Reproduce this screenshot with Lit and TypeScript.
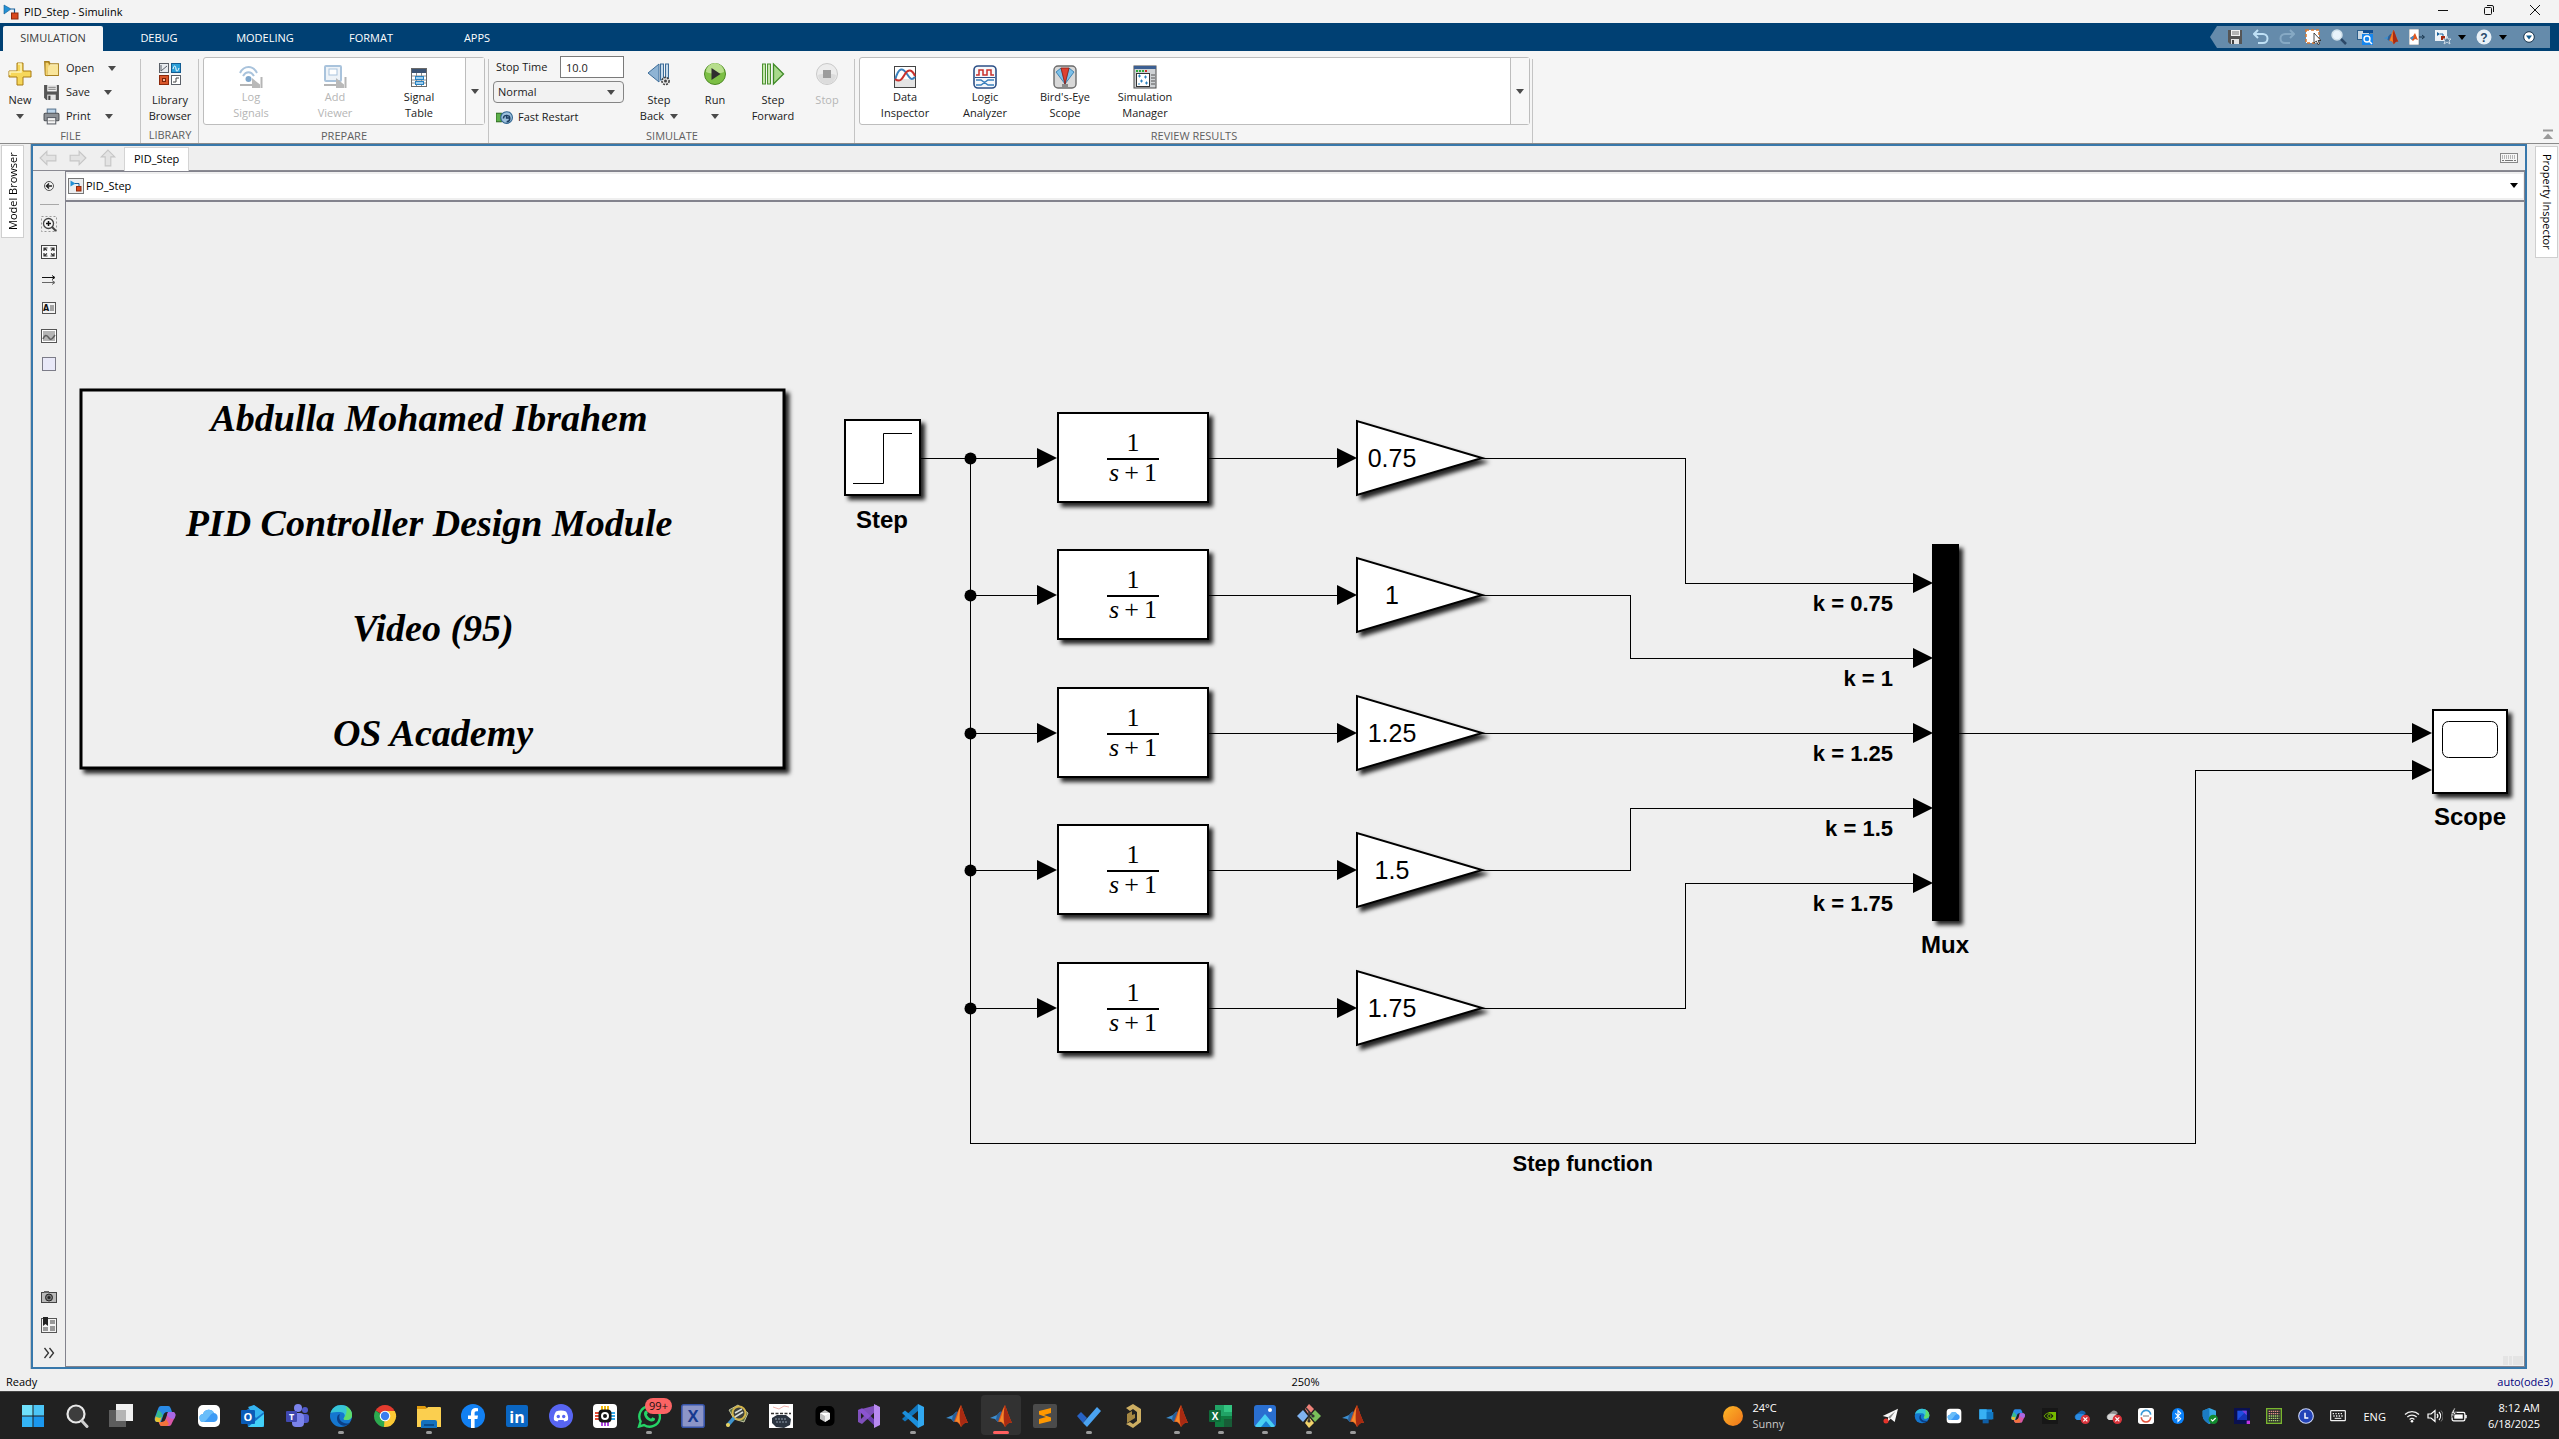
import { LitElement, html, svg, css, nothing, TemplateResult } from "lit";
import { customElement } from "lit/decorators.js";

/* ---------- icon helpers ---------- */

const icon = (size: number, box: number, body: unknown) => html`<svg
  class="ico" width=${size} height=${size} viewBox="0 0 ${box} ${box}" aria-hidden="true">${body}</svg>`;

const caret = (w = 8, fill = "#4a4a4a") => html`<svg class="ico" width=${w} height="5" viewBox="0 0 8 5"
  aria-hidden="true"><path d="M0 0h8L4 5z" fill=${fill} /></svg>`;

const matlab = svg`
  <path d="M1 14 8 11 11 8 15 10 9 18 6 15z" fill="#3d8fd1" />
  <path d="M8 11 11 8 12 7 15 11 9 18 7 15.500z" fill="#2a5f96" />
  <path d="M16 1C13 6 12 10 9 18c3-1 5 1 7 5 2-2 3-5 7-4C20 13 18 6 16 1z" fill="#e0561c" />
  <path d="M16 1c-2 7-2 13 0 22 2-2 3-5 7-4C20 13 18 6 16 1z" fill="#a82a12" />
  <path d="M15.500 3c-1 5-1.500 11-.5 17-1.500-2-3-3-5-2 3-6 3-10 5.500-15z" fill="#f58a2c" />`;

const edge = svg`
  <circle cx="12" cy="12" r="11" fill="#1577cf" />
  <path d="M1.500 9C3 4 7 1 12 1c7 0 11 5 11 10 0 3-2 5-6 5-2 0-3-1-2-2 2-3 0-6-4-6-4 0-8 0-9.500 1z" fill="#37c5d6" />
  <path d="M17 2.200c4 2 6 5 6 8.800 0 3-2 5-6 5-2 0-3-1-2-2 3-4 3-8 2-11.800z" fill="#5fdc6a" />
  <path d="M9 11c-2 3-1 8 3 10 3 1.500 7 .5 9-2-4 1-8 0-10-3-1-2-1-4 0-6z" fill="#0b3f86" />`;

const copilot = svg`
  <path d="M8 2h7c2 0 2 1 3 3l1 3h-5c-2 0-3 1-4 4l-2 6H5c-3 0-4-2-3-5l3-8c.6-2 1.500-3 3-3z" fill="#2a8be6" />
  <path d="M3 12c2-1 4-1 6 0l-2 6H5c-3 0-4-2-2-6z" fill="#e8c12f" />
  <path d="M5 6c2 1 4 3 5 6l-3 2-4-1z" fill="#37bb8c" />
  <path d="M16 22H9c-2 0-2-1-3-3l-.4-1H9c2 0 3-1 4-4l2-6h4c3 0 4 2 3 5l-3 6c-.6 2-1.500 3-3 3z" fill="#d957a8" />
  <path d="M6 18h3c2 0 3-1 4-3l3 5-2 2H9c-2 0-2-1-3-4z" fill="#f2733c" />
  <path d="M15 8h4c3 0 4 2 3 5l-1 2c-2 0-5-1-7-4z" fill="#a768e6" />`;

const icloud = svg`
  <rect x="1" y="1" width="22" height="22" rx="5" fill="#fff" />
  <path d="M7 18a4 4 0 0 1-1-8 6 6 0 0 1 11-1 4.600 4.600 0 0 1 0 9z" fill="#3d9bf5" />
  <path d="M6 10a6 6 0 0 1 11-1c-4 0-5 6-10 9a4 4 0 0 1-1-8z" fill="#69bdf9" />`;

const floppy = svg`
  <path d="M1 1h14v14H3l-2-2z" fill="#555" />
  <rect x="4" y="1" width="9" height="6" fill="#f2f2f2" />
  <path d="M5 3h7M5 5h7" stroke="#777" />
  <rect x="4" y="10" width="8" height="5" fill="#e4e4e4" />
  <rect x="5" y="11" width="2" height="4" fill="#444" />`;

const simulink = svg`
  <path d="M1 1l7 4-7 5z" fill="#2390d4" stroke="#135c92" stroke-width=".6" />
  <path d="M8 5h3.500v4" fill="none" stroke="#16609b" stroke-width="1.200" />
  <rect x="8.500" y="9" width="6.500" height="6" fill="#d9481c" stroke="#8d2a0c" />`;

/* ---------- ribbon icons (24 grid) ---------- */

const R: Record<string, unknown> = {
  plus: svg`<path d="M9 1h6v8h8v6h-8v8H9v-8H1V9h8z" fill="#f6d75a" stroke="#a87a12" />
    <path d="M10 2h3v8H2v3" fill="none" stroke="#fdf3b8" stroke-width="1.500" />`,
  library: svg`<rect x="1.500" y="1.500" width="9" height="9" fill="#e9ecf0" stroke="#5b6068" />
    <path d="M3 3v6l6-5" fill="none" stroke="#5b6068" />
    <rect x="13.500" y="1.500" width="9" height="9" fill="#2b9fd8" stroke="#135c92" />
    <path d="M15 7c1-4 2.500-4 3 0s2 2 3-1" fill="none" stroke="#fff" />
    <rect x="1.500" y="13.500" width="9" height="9" fill="#d9562a" stroke="#8d2a0c" />
    <rect x="4.500" y="16.500" width="3" height="3" fill="#f6b598" stroke="#7a2208" />
    <rect x="13.500" y="13.500" width="9" height="9" fill="#fff" stroke="#5b6068" />
    <path d="M15 20h3v-4h3" fill="none" stroke="#444" />`,
  logsig: svg`<g fill="none" stroke="#a9c3dc" stroke-width="2"><path d="M1 8c4-8 13-8 17 0" /><path d="M4 11c3-5 8-5 11 0" /></g>
    <circle cx="9.500" cy="14" r="3" fill="#7fa7cc" />
    <path d="M1 20h13M22.500 12v11" stroke="#b5b5b5" stroke-width="2" /><path d="M13 13l8 6.500V23h-8z" fill="#b9b9b9" />`,
  viewer: svg`<rect x="2" y="1" width="16" height="15" rx="1" fill="#eef3f8" stroke="#a9c3dc" stroke-width="2" />
    <rect x="6" y="4" width="8" height="6" fill="#fff" stroke="#a9c3dc" />
    <path d="M1 20h13M22.500 12v11" stroke="#b5b5b5" stroke-width="2" /><path d="M13 13l8 6.500V23h-8z" fill="#b9b9b9" />`,
  sigtable: svg`<rect x="4.500" y="3.500" width="15" height="18" fill="#fff" stroke="#6a6a6a" /><rect x="5" y="4" width="14" height="4" fill="#3c5372" />
    <path d="M5 11h14M5 15h14M5 18h14M9.500 8v13M14.500 8v13" stroke="#8c8c8c" />
    <rect x="8.500" y="11.500" width="8" height="3" fill="#9fd0f0" stroke="#2b82c0" /><rect x="8.500" y="16.500" width="8" height="3" fill="#9fd0f0" stroke="#2b82c0" />`,
  stepback: svg`<path d="M12 2v18L1 11z" fill="#8fb4d4" stroke="#3c6c98" /><rect x="13.500" y="2" width="3" height="16" fill="#c7dbec" stroke="#3c6c98" />
    <rect x="18.500" y="2" width="3" height="14" fill="#c7dbec" stroke="#3c6c98" /><circle cx="18.500" cy="19" r="3.600" fill="#e4e4e4" stroke="#444" stroke-width="1.600" stroke-dasharray="2 1" /><circle cx="18.500" cy="19" r="1.500" fill="#444" />`,
  run: svg`<circle cx="12" cy="12" r="10.500" fill="#7cbf45" stroke="#4e8a25" /><path d="M3 10a9 9 0 0 1 18 0c-5 2-13 2-18 0z" fill="#b7de8c" />
    <path d="M8.500 6v12l9-6z" fill="#2e2e2e" />`,
  stepfwd: svg`<rect x="1.500" y="2" width="3" height="20" fill="#c4e6ab" stroke="#4b9030" /><rect x="6.500" y="2" width="3" height="20" fill="#c4e6ab" stroke="#4b9030" />
    <path d="M12.500 2v20l10-10z" fill="#a9d98c" stroke="#3f8a27" stroke-width="1.300" />`,
  stop: svg`<circle cx="12" cy="12" r="10.500" fill="#ececec" stroke="#c9c9c9" /><path d="M3 13a9 9 0 0 0 18 0c-5-2-13-2-18 0z" fill="#dcdcdc" /><rect x="8" y="8" width="8" height="8" fill="#9c9c9c" />`,
  datainsp: svg`<rect x="1.500" y="1.500" width="21" height="21" fill="#fff" stroke="#444" /><path d="M2 14h20v8H2z" fill="#e4e4e4" />
    <path d="M2 15C6 1 10 3 14 9s5 6 8 3" fill="none" stroke="#3a80bd" stroke-width="2" /><path d="M2 14c5 4 7 0 10-5s7-5 10 2" fill="none" stroke="#c9302c" stroke-width="2" />`,
  logic: svg`<rect x="1" y="1" width="22" height="22" rx="4" fill="#f6f8fb" stroke="#2c4f86" stroke-width="1.600" />
    <path d="M3 10h3V5h4v5h4V5h4v5h3" fill="none" stroke="#c9302c" stroke-width="1.500" />
    <path d="M2 12.500h20" stroke="#2c4f86" /><path d="M3 15h5l7 5h6M3 20h5l7-5h6" fill="none" stroke="#3a80bd" stroke-width="1.500" />`,
  bird: svg`<rect x="1" y="1" width="22" height="22" rx="4" fill="#d8d8d8" stroke="#6b6b6b" stroke-width="1.400" />
    <path d="M3 7l5-4 4 16zM21 7l-5-4-4 16z" fill="#7cc1ea" stroke="#2b75a8" stroke-width=".8" />
    <path d="M8 3h8l-4 16z" fill="#dd4030" stroke="#8f1d12" stroke-width=".8" /><rect x="9" y="19" width="6" height="3" fill="#8a8a8a" />`,
  simmgr: svg`<rect x="1" y="1" width="22" height="22" fill="#cfd2d5" stroke="#4a4a4a" /><rect x="1" y="1" width="22" height="3" fill="#3c5f92" />
    <path d="M3 6h2M6 6h2M9 6h2" stroke="#2fae3a" stroke-width="2" /><path d="M12 6h2" stroke="#cf2d24" stroke-width="2" />
    <rect x="3.500" y="8.500" width="13" height="13" fill="#fff" stroke="#333" />
    <path d="M5 11h3M6.500 9.500v3M11 12h3M12.500 10.500v3M7 16h3M8.500 14.500v3M12 18h3M13.500 16.500v3M5 19h2" stroke="#2b82c0" />
    <path d="M18 10h4M18 13h4M18 16h4M18 19h4" stroke="#555" />`,
};

/* ---------- small ribbon and quick-access icons (16 grid) ---------- */

const S: Record<string, unknown> = {
  open: svg`<path d="M1 1h5l1 2h8v12H2z" fill="#a8801f" /><path d="M3 4h11v10H4z" fill="#fff4c4" /><path d="M2 2h3l1 2-2 11-2-1z" fill="#f3d26d" stroke="#a8801f" stroke-width=".8" /><path d="M5 5h9v9H4z" fill="#f9e59a" />`,
  save: floppy,
  print: svg`<rect x="4" y="1" width="8" height="5" fill="#bcd4ea" stroke="#5c7790" /><rect x="1" y="5" width="14" height="7" rx="1" fill="#8d9196" stroke="#4d5156" />
    <rect x="4" y="9" width="8" height="6" fill="#f5f5f5" stroke="#5c6068" /><path d="M5 12h6" stroke="#999" />`,
  fast: svg`<rect x="0" y="4" width="5" height="8" fill="#5db04a" stroke="#2c6b1f" /><circle cx="10" cy="8" r="5.500" fill="#9cc0dd" stroke="#2f648f" />
    <path d="M7 9a3 3 0 1 1 3 3M10 5.500v3h2.500" fill="none" stroke="#1d3f63" stroke-width="1.400" />`,
  undo: svg`<path d="M1 5h9a4.500 4.500 0 0 1 0 9H5" fill="none" stroke="#bfe0f5" stroke-width="2" /><path d="M5 1L1 5l4 4" fill="none" stroke="#bfe0f5" stroke-width="2" />`,
  redo: svg`<path d="M15 5H6a4.500 4.500 0 0 0 0 9h5" fill="none" stroke="#86a9c4" stroke-width="2" /><path d="M11 1l4 4-4 4" fill="none" stroke="#86a9c4" stroke-width="2" />`,
  select: svg`<rect x="1" y="1" width="13" height="13" fill="#fff" stroke="#d9772e" stroke-width="1.500" stroke-dasharray="3 2" /><path d="M9 4v10l2.300-2L13 15.500l1.500-.7L13 11.500h3z" fill="#fff" stroke="#222" stroke-width=".8" />`,
  find: svg`<circle cx="6" cy="6" r="5" fill="#e8f3fb" stroke="#cfe0ea" stroke-width="1.500" /><path d="M10 10l5 5" stroke="#2d4968" stroke-width="2.500" />`,
  browse: svg`<rect x=".5" y="1.500" width="12" height="9" fill="#c9d7e2" stroke="#2c5f8c" /><path d="M6 1h10v3H6z" fill="#0f4f94" /><rect x="5" y="5" width="11" height="11" fill="#1686ee" /><circle cx="10" cy="10" r="3" fill="none" stroke="#fff" stroke-width="1.400" /><path d="M12 12l3 3" stroke="#fff" stroke-width="1.400" />`,
  export: svg`<rect x="0" y="0" width="10" height="16" fill="#fff" stroke="#555" stroke-width=".5" /><path d="M1 9l3-2 2-3 3 7-3-1-2 2z" fill="#e0561c" /><path d="M1 9l3-2 1 1-2 3z" fill="#3d8fd1" /><path d="M10 8h5M13 6l2.500 2L13 10" fill="none" stroke="#16324b" />`,
  model: svg`<rect x="0" y="1" width="12" height="11" fill="#eef3f7" /><path d="M2 3l3 2-3 2z" fill="#16609b" /><path d="M5 5h3v3" fill="none" stroke="#16609b" /><rect x="6" y="7" width="4" height="4" fill="#a2270e" /><path d="M12 7l1 3h3l-2 2 1 3-3-2-3 2 1-3-2-2h3z" fill="#5c7f9d" stroke="#cbd9e4" />`,
  help: svg`<circle cx="8" cy="8" r="7.500" fill="#e9f1f7" /><text x="8" y="12.500" text-anchor="middle" font-family="Liberation Sans" font-weight="bold" font-size="12" fill="#27496b">?</text>`,
  more: svg`<circle cx="8" cy="8" r="5.300" fill="#fff" stroke="#16324b" stroke-width="1" /><path d="M5 6.500h6L8 10.500z" fill="#0f5b8f" />`,
  model16: svg`<rect x=".5" y=".5" width="15" height="15" fill="#eceef0" stroke="#777" /><path d="M2.500 2.500l5 3-5 3z" fill="#2390d4" /><path d="M7 5.500h4v3" fill="none" stroke="#16609b" /><rect x="8.500" y="8.500" width="4.500" height="4.500" fill="#d9481c" stroke="#8d2a0c" />`,
};

/* ---------- canvas palette icons (16 grid) ---------- */

const P: Record<string, unknown> = {
  hide: svg`<circle cx="8" cy="8" r="4.500" fill="#f4f4f4" stroke="#555" /><path d="M11 8H6M8 5.500L5.500 8 8 10.500" fill="none" stroke="#222" stroke-width="1.500" />`,
  zoom: svg`<rect x=".5" y=".5" width="15" height="15" fill="none" stroke="#999" stroke-dasharray="2 2" /><circle cx="7.500" cy="7.500" r="5" fill="#f6f6f6" stroke="#444" stroke-width="1.300" /><path d="M11 11l4 4" stroke="#444" stroke-width="2" /><path d="M5 7.500h5M7.500 5v5" stroke="#111" stroke-width="1.500" />`,
  fit: svg`<rect x=".5" y="1.500" width="15" height="13" fill="#fafafa" stroke="#444" /><path d="M3 7V4h3.500M3 4l3 2.500M13 7V4H9.500M13 4l-3 2.500M3 9v3h3.500M3 12l3-2.500M13 9v3H9.500M13 12l-3-2.500" fill="none" stroke="#333" stroke-width="1.200" />`,
  lines: svg`<path d="M1 5.500h12M11 3.500l3 2-3 2" fill="none" stroke="#111" /><path d="M1 10.500h12M11 8.500l3 2-3 2" fill="none" stroke="#666" />`,
  text: svg`<rect x="1.500" y="2.500" width="13" height="11" fill="#f3f3f3" stroke="#555" /><text x="2" y="11" font-family="DejaVu Sans" font-weight="bold" font-size="8" fill="#111">A</text><path d="M9 6h4M9 8h4M9 10h4" stroke="#555" />`,
  image: svg`<rect x=".5" y="1.500" width="15" height="13" fill="#fff" stroke="#555" /><rect x="2" y="3" width="12" height="10" fill="#b5b5b5" /><path d="M2 11c2-5 4-4 6-1s4 0 6-3" fill="none" stroke="#5f5f5f" stroke-width="1.500" />`,
  area: svg`<rect x="1.500" y="1.500" width="13" height="13" fill="#e9e9f8" stroke="#7c7c88" />`,
  camera: svg`<rect x=".5" y="3.500" width="15" height="10" fill="#b9b9b9" stroke="#444" /><rect x="3" y="2" width="5" height="2" fill="#666" /><circle cx="8" cy="8.500" r="3.500" fill="#777" stroke="#222" /><circle cx="8" cy="8.500" r="1.500" fill="#222" />`,
  book: svg`<rect x=".5" y="1.500" width="15" height="14" fill="#f3f3f3" stroke="#555" /><path d="M2 0h5v9L4.500 7 2 9z" fill="#222" /><path d="M9 3h5v4H9zM9 9h5v5H9zM2 10h5v4H2z" fill="#999" />`,
  more: svg`<path d="M3.500 3l4 5-4 5M8.500 3l4 5-4 5" fill="none" stroke="#333" stroke-width="1.300" />`,
  left: svg`<path d="M1 8l6-6v3.500h8v5H7V14z" fill="#e3e3e3" stroke="#c6c6c6" />`,
  right: svg`<path d="M15 8L9 2v3.500H1v5h8V14z" fill="#e3e3e3" stroke="#c6c6c6" />`,
  up: svg`<path d="M8 1l6 6h-3.500v8h-5V7H2z" fill="#e3e3e3" stroke="#c6c6c6" />`,
};

/* ---------- taskbar ---------- */

interface Task { name: string; art: unknown; state?: "open" | "active"; badge?: string }

const txt = (s: string, x: number, y: number, size: number, fill: string) =>
  svg`<text x=${x} y=${y} text-anchor="middle" font-family="Open Sans, sans-serif" font-weight="bold" font-size=${size} fill=${fill}>${s}</text>`;

const tasks: Task[] = [
  { name: "Start", art: svg`<path d="M1 1h10.500v10.500H1z" fill="#6fe0fb" /><path d="M12.500 1H23v10.500H12.500z" fill="#4cc6f7" /><path d="M1 12.500h10.500V23H1z" fill="#34b4f5" /><path d="M12.500 12.500H23V23H12.500z" fill="#1a97ee" />` },
  { name: "Search", art: svg`<circle cx="11" cy="10" r="8.500" fill="#3d3d3d" stroke="#e8e8e8" stroke-width="2.200" /><path d="M17 17l5 5.500" stroke="#cfcfcf" stroke-width="3" stroke-linecap="round" />` },
  { name: "Task view", art: svg`<rect x="7" y="0" width="17" height="17" fill="#f0f0f0" /><rect x="0" y="6" width="17" height="17" fill="#5d5d5d" /><rect x="7" y="6" width="10" height="11" fill="#b4b4b4" />` },
  { name: "Copilot", art: copilot },
  { name: "iCloud", art: icloud },
  { name: "Outlook", art: svg`<path d="M4 7l9-6 10 7v15H7z" fill="#1373c9" /><path d="M7 3l6-2 10 7-8 6z" fill="#35b4f0" /><path d="M7 23l16-13v11a2 2 0 0 1-2 2z" fill="#43d1f8" /><rect x="0" y="6" width="14" height="14" rx="1" fill="#0a5cb8" />${txt("O", 7, 17, 11, "#fff")}` },
  { name: "Teams", art: svg`<circle cx="20" cy="6" r="3" fill="#5059c9" /><circle cx="13" cy="4" r="4" fill="#7b83eb" /><rect x="16" y="10" width="8" height="9" rx="3" fill="#5059c9" /><rect x="7" y="9" width="12" height="14" rx="4" fill="#7b83eb" /><rect x="1" y="7" width="11" height="11" rx="1" fill="#4048b0" />${txt("T", 6.5, 16, 9, "#fff")}` },
  { name: "Edge", art: edge, state: "open" },
  { name: "Chrome", art: svg`<path d="M12 12L2.500 6.500A11 11 0 0 1 21.500 6.500z" fill="#e33b2e" /><path d="M12 12h-1L2.500 6.500A11 11 0 0 0 11 23l5.500-8z" fill="#2da94f" /><path d="M12 7h9.800A11 11 0 0 1 11 23z" fill="#fcc934" /><circle cx="12" cy="12" r="5.300" fill="#fff" /><circle cx="12" cy="12" r="4.200" fill="#3b7ded" />` },
  { name: "File Explorer", art: svg`<path d="M0 2h8l3 3h-3v6H0z" fill="#e19c0f" /><path d="M0 5h9l2-2h12a1 1 0 0 1 1 1v19H0z" fill="#fbcf4f" /><path d="M4 24v-6a2 2 0 0 1 2-2h12a2 2 0 0 1 2 2v6z" fill="#1471be" /><path d="M7 20h10v2H7z" fill="#0a4c8c" />`, state: "open" },
  { name: "Facebook", art: svg`<circle cx="12" cy="12" r="12" fill="#1280f2" /><path d="M10 24v-9H7v-3.500h3V9c0-3.300 2-5 4.700-5l2.300.2v3h-1.500c-1.500 0-1.900.9-1.900 1.900v2.400H17l-.6 3.500h-2.800V24z" fill="#fff" />` },
  { name: "LinkedIn", art: svg`<rect x="1" y="1" width="22" height="22" rx="2" fill="#0a66c2" />${txt("in", 12, 19, 16, "#fff")}` },
  { name: "Discord", art: svg`<circle cx="12" cy="12" r="12" fill="#5865f2" /><path d="M7 7.500c3-1.300 7-1.300 10 0 2 3 2.500 6 2 8.500-1.500 1-2.500 1.300-3.500 1.500l-1-1.500h-5l-1 1.500c-1-.2-2-.5-3.500-1.500-.5-2.500 0-5.500 2-8.500z" fill="#fff" /><circle cx="9.300" cy="12.500" r="1.700" fill="#5865f2" /><circle cx="14.700" cy="12.500" r="1.700" fill="#5865f2" />` },
  { name: "Hub", art: svg`<rect width="24" height="24" rx="4" fill="#fff" /><path d="M9 2v4M12 2v4M15 2v4" stroke="#f2b90d" stroke-width="2" /><path d="M9 18v4M12 18v4M15 18v4" stroke="#b04be0" stroke-width="2" /><path d="M2 9h4M2 12h4M2 15h4" stroke="#e34b35" stroke-width="2" /><path d="M18 9h4M18 12h4M18 15h4" stroke="#36a9e8" stroke-width="2" /><rect x="5.500" y="5.500" width="13" height="13" rx="4" fill="#151515" /><circle cx="12" cy="12" r="3" fill="none" stroke="#fff" stroke-width="2" />` },
  { name: "WhatsApp", art: svg`<path d="M2 22.500l1.600-5.200A10.300 10.300 0 1 1 7 21z" fill="none" stroke="#25d366" stroke-width="2.400" /><path d="M8 7c1-1 2-.5 2.400 1l.4 1.300-1 1.500c1 2 2.400 3.200 4.200 4l1.500-1.500 2.500 1.200c.5 2-2 3.500-4 3-4-1-7-4.500-7-8 0-1 .3-1.800 1-2.500z" fill="#25d366" />`, state: "open", badge: "99+" },
  { name: "Xming", art: svg`<rect x=".8" y=".8" width="22.400" height="22.400" rx="2" fill="#8c95c8" stroke="#3754a8" stroke-width="1.600" />${txt("X", 12, 18, 16, "#16398f")}` },
  { name: "Inspector", art: svg`<path d="M4 6l9-5 10 8-4 9-10-3z" fill="#5a6e42" stroke="#dfe0b8" stroke-width=".8" /><circle cx="14" cy="9" r="6.500" fill="#3b3f3c" stroke="#d2b44b" stroke-width="2" /><path d="M10 9l7-4M10 13l8-5" stroke="#d7ddd8" stroke-width="1.600" /><path d="M9 14l-7 8" stroke="#3f93cd" stroke-width="3.500" /><circle cx="3" cy="21" r="2" fill="#ecd35d" />` },
  { name: "Notes", art: svg`<rect width="24" height="24" fill="#fff" /><path d="M4 3l6 2 5-3 5 1" fill="none" stroke="#efb3ac" /><path d="M2 9.500h20" stroke="#333" stroke-width="1.500" stroke-dasharray="3 1.500" /><path d="M3 14l5-3h9l5 4-1 6-6 3-8-1-4-4z" fill="#2b3440" /><path d="M6 15h12M7 18h11" stroke="#8f9baa" stroke-dasharray="2 1" />` },
  { name: "Cursor", art: svg`<rect x="2.500" y="2" width="19" height="20" rx="5" fill="#000" /><path d="M12 6l5 3v6l-5 3-5-3V9z" fill="#bdbdbd" /><path d="M12 12l5-3v6l-5 3z" fill="#ededed" /><path d="M7 9h10l-5 3z" fill="#fff" />` },
  { name: "Visual Studio", art: svg`<path d="M1 6l4-2 14 13V23z" fill="#6b3fae" /><path d="M1 6v12l4 2L20 6V1z" fill="#9158d6" opacity=".85" /><path d="M17 0l6 3v18l-6 3z" fill="#b98af0" /><path d="M4 9v6l3-3z" fill="#202020" />` },
  { name: "VS Code", art: svg`<path d="M17 0v7L4 17.500 1 15z" fill="#1176bd" /><path d="M17 24v-7L4 6.500 1 9z" fill="#1b8fdc" /><path d="M17 0l6 3v18l-6 3z" fill="#31a8f0" />`, state: "open" },
  { name: "MATLAB", art: matlab },
  { name: "MATLAB Simulink", art: matlab, state: "active" },
  { name: "Sublime Text", art: svg`<rect width="24" height="24" rx="2" fill="#4b4b4b" /><path d="M18 4v5l-7 2 7 2.500V17L6 20v-5l7-2-7-2.500V7z" fill="#ff9800" />` },
  { name: "To Do", art: svg`<path d="M0 12l4-4 6 6-4 5z" fill="#2762c4" /><path d="M6 19l14-16 4 4-14 16z" fill="#4aa3f2" />`, state: "open" },
  { name: "Crypto Wallet", art: svg`<path d="M5 4l7-4 8 5v13l-8 6-7-4 4-2 3 2 4-3V8l-4-3-3 2z" fill="#cdae62" /><path d="M6 14v-4l5-3v4l3-1v4l-8 5z" fill="#a58742" />` },
  { name: "MATLAB Editor", art: matlab, state: "open" },
  { name: "Excel", art: svg`<path d="M6 1h17v22H6z" fill="#21a366" /><path d="M15 1h8v7h-8z" fill="#33c481" /><path d="M6 12h17v11H6z" fill="#107c41" /><path d="M15 15h8v8h-8z" fill="#185c37" /><rect x="0" y="6" width="12" height="12" rx="1" fill="#0f6b39" />${txt("X", 6, 16, 10, "#fff")}`, state: "open" },
  { name: "Photos", art: svg`<rect x="1" y="1" width="22" height="22" rx="3" fill="#2a6fd0" /><path d="M2 22L12 10l10 12a3 3 0 0 1-2 1H4a3 3 0 0 1-2-1z" fill="#48d0f3" /><path d="M8 23l5-6 5 6z" fill="#187fd2" /><circle cx="17" cy="6" r="2" fill="#fff" />`, state: "open" },
  { name: "Git", art: svg`<path d="M8 5l4-5 5 5-5 6z" fill="#ee8279" /><path d="M0 12l6-6 5 6-5 6z" fill="#80b3f0" /><path d="M24 12l-6-6-5 6 5 6z" fill="#7ac05a" /><path d="M8 19l4-6 5 6-5 5z" fill="#f3d36b" /><path d="M9 4l7 8M12 7v10" stroke="#333" stroke-width="1.500" /><circle cx="16" cy="12" r="1.600" fill="#333" /><circle cx="12" cy="17" r="1.600" fill="#333" />`, state: "open" },
  { name: "MATLAB Figure", art: matlab, state: "open" },
];

const redX = svg`<circle cx="17" cy="17" r="7" fill="#d9343c" /><path d="M14 14l6 6M20 14l-6 6" stroke="#fff" stroke-width="1.800" />`;
const cloud = (fill: string, dark: string) => svg`<path d="M3 17a4.500 4.500 0 0 1 1-8l6-5a7 7 0 0 1 8 4z" fill=${dark} /><path d="M4 18a5 5 0 0 1 2-9c8-1 13 2 15 6v3z" fill=${fill} />${redX}`;

const tray: { name: string; art: unknown }[] = [
  { name: "Telegram", art: svg`<path d="M1 12L24 1l-5 20-6-5-4 4V14z" fill="#f8f8f8" /><path d="M9 14l11-9-8 11z" fill="#8a8a8a" /><circle cx="6" cy="19.500" r="3.800" fill="#e5342b" />` },
  { name: "Edge", art: edge },
  { name: "iCloud", art: icloud },
  { name: "Your Phone", art: svg`<path d="M2 2h19v15H2z" fill="#1c8ddd" /><path d="M2 2h11v15H2z" fill="#38b1f3" /><path d="M13 6h10v11H13z" fill="#1279c4" /><path d="M7 17h9v6H7z" fill="#0f5ea6" />` },
  { name: "Copilot", art: copilot },
  { name: "NVIDIA", art: svg`<rect width="24" height="24" fill="#171717" /><path d="M10 6h11v12H10z" fill="#76b900" /><path d="M3 12c4-6 11-6 15 0-4 6-11 6-15 0z" fill="#1b2410" stroke="#76b900" stroke-width="1.300" /><circle cx="11" cy="12" r="2.500" fill="none" stroke="#76b900" stroke-width="1.300" />` },
  { name: "OneDrive", art: cloud("#2a8be0", "#1660aa") },
  { name: "OneDrive personal", art: cloud("#d6d6d6", "#8e8e8e") },
  { name: "Sync", art: svg`<rect width="24" height="24" rx="4" fill="#fff" /><path d="M5 11a7 7 0 0 1 14-1" fill="none" stroke="#3a9bd8" stroke-width="2.500" /><path d="M19 14a7 7 0 0 1-14 0" fill="none" stroke="#e5533d" stroke-width="2.500" /><path d="M8 12h8" stroke="#777" stroke-width="2" stroke-dasharray="2 1" />` },
  { name: "Bluetooth", art: svg`<rect x="3" y="0" width="18" height="24" rx="9" fill="#0a80f8" /><path d="M8 8l8 8-4 4V4l4 4-8 8" fill="none" stroke="#fff" stroke-width="1.700" />` },
  { name: "Security", art: svg`<path d="M11 0l10 4v7c0 6-4 10-10 13C5 21 1 17 1 11V4z" fill="#38a9e6" /><path d="M11 0v24C5 21 1 17 1 11V4z" fill="#1b7cc4" /><circle cx="17" cy="17" r="7" fill="#128a2e" /><path d="M13.500 17l2.500 2.500 4.500-4.500" fill="none" stroke="#fff" stroke-width="1.800" />` },
  { name: "Graphics", art: svg`<rect width="24" height="24" fill="#0a1050" /><rect x="5" y="4" width="14" height="14" fill="#1e4fe0" /><path d="M19 4v14L5 18z" fill="#1532b8" /><path d="M12 4h7v7z" fill="#7a3fe0" /><rect x="19" y="19" width="5" height="5" fill="#c335e0" />` },
  { name: "Monitor", art: svg`<rect x="1" y="1" width="22" height="22" fill="#2c2c2c" stroke="#79b52e" stroke-width="2" /><path d="M4 5h16M4 8.500h16" stroke="#e4908a" stroke-width="2" stroke-dasharray="2 1" /><path d="M4 12h16M4 15.500h16M4 19h16" stroke="#a9d66b" stroke-width="2" stroke-dasharray="2 1" />` },
  { name: "Clock", art: svg`<circle cx="12" cy="12" r="11" fill="#2343b8" stroke="#cdd6f4" stroke-width="1.600" /><path d="M10.500 7v8h5" fill="none" stroke="#fff" stroke-width="2.200" />` },
  { name: "Touch keyboard", art: svg`<rect x="1" y="4" width="22" height="15" rx="1" fill="none" stroke="#f2f2f2" stroke-width="1.800" /><path d="M4 8.500h16M5 12h15" stroke="#f2f2f2" stroke-width="2" stroke-dasharray="2 2" /><path d="M7 15.500h10" stroke="#f2f2f2" stroke-width="1.600" />` },
];

/* ---------- block diagram ---------- */

const rows = [
  { y: 458, k: "0.75", bend: 1685, port: 583 },
  { y: 595, k: "1", bend: 1630, port: 658 },
  { y: 733, k: "1.25", bend: 1630, port: 733 },
  { y: 870, k: "1.5", bend: 1630, port: 808 },
  { y: 1008, k: "1.75", bend: 1685, port: 883 },
];
const noteLines = [
  { text: "Abdulla Mohamed Ibrahem", x: 429 },
  { text: "PID Controller Design Module", x: 429 },
  { text: "Video (95)", x: 433 },
  { text: "OS Academy", x: 433 },
];

const head = (x: number, y: number) => svg`<path class="solid" d="M${x - 20} ${y - 10}L${x} ${y}L${x - 20} ${y + 10}z" />`;

@customElement("block-canvas")
export class BlockCanvas extends LitElement {
  static styles = css`
    :host { display: block; flex: 1; min-width: 0; overflow: hidden; background: #efefef; }
    svg { display: block; width: 100%; height: 100%; }
    .wire { fill: none; stroke: #000; stroke-width: 1; shape-rendering: crispEdges; }
    .solid { fill: #000; }
    .block { fill: #fff; stroke: #000; stroke-width: 2; filter: url(#drop); }
    .note { fill: #efefef; stroke: #000; stroke-width: 3; filter: url(#drop); }
    .mux { fill: #000; filter: url(#drop); }
    .scr { fill: none; stroke: #000; stroke-width: 1; }
    .name { font: bold 24px "Liberation Sans", Arial, sans-serif; text-anchor: middle; }
    .sig { font: bold 22px "Liberation Sans", Arial, sans-serif; text-anchor: end; }
    .gain { font: 25px "Liberation Sans", Arial, sans-serif; text-anchor: middle; }
    .math { font: 26px "Liberation Serif", "Times New Roman", serif; text-anchor: middle; }
    .var { font-style: italic; }
    .memo { font: italic bold 38px "Liberation Serif", "Times New Roman", serif; text-anchor: middle; }
  `;

  private row(r: (typeof rows)[number]) {
    const c = r.y + 0.5;
    return svg`
      <path class="wire" d="M970 ${c}H1040M1208 ${c}H1340M1482 ${c}H${r.bend + 0.5}V${r.port + 0.5}H1915" />
      <circle class="solid" cx="970.500" cy=${c} r="6" />
      ${head(1057, r.y)}
      <rect class="block" x="1058" y=${r.y - 45} width="150" height="89" />
      <text class="math" x="1133" y=${r.y - 7}>1</text>
      <rect class="solid" x="1107" y=${r.y} width="52" height="2" />
      <text class="math" x="1133" y=${r.y + 23}><tspan class="var">s</tspan>${"\u2009+\u2009"}1</text>
      ${head(1357, r.y)}
      <path class="block" d="M1357 ${r.y - 37}V${r.y + 37}L1482 ${r.y}z" />
      <text class="gain" x="1392" y=${r.y + 9}>${r.k}</text>
      ${head(1933, r.port)}
      <text class="sig" x="1893" y=${r.port + 28}>k = ${r.k}</text>`;
  }

  render() {
    return html`<svg role="img" aria-label="PID_Step block diagram">
      <defs>
        <filter id="drop" filterUnits="userSpaceOnUse" x="60" y="200" width="2500" height="1200">
          <feDropShadow dx="4" dy="4" stdDeviation="2" flood-color="#000" flood-opacity=".85" />
        </filter>
      </defs>
      <g transform="translate(-66 -202)">
        <rect class="note" x="81" y="390" width="703" height="378" />
        ${noteLines.map((t, i) => svg`<text class="memo" x=${t.x} y=${431 + i * 105}>${t.text}</text>`)}
        <path class="wire" d="M921 458.500H970M970.500 458V1143.500H2195.500V770.500H2415M1958 733.500H2415" />
        ${rows.map((r) => this.row(r))}
        <rect class="block" x="845" y="420" width="75" height="75" />
        <path class="scr" d="M853 483.500H883.500V433.500H912" />
        <text class="name" x="882" y="528">Step</text>
        <rect class="mux" x="1932" y="544" width="27" height="377" />
        <text class="name" x="1945" y="953">Mux</text>
        ${head(2432, 733)} ${head(2432, 770)}
        <rect class="block" x="2433" y="710" width="74" height="83" />
        <rect class="scr" x="2442.500" y="721.500" width="55" height="36" rx="6" />
        <text class="name" x="2470" y="825">Scope</text>
        <text class="sig" x="1653" y="1171">Step function</text>
        <path d="M2503 1356h5v9h-5zM2509 1356h3v9h-3zM2513 1356h10v9h-10z" fill="#e4e4e4" />
      </g>
    </svg>`;
  }
}

@customElement("app-root")
export class AppRoot extends LitElement {
  static styles = css`
    :host { display: flex; flex-direction: column; min-height: 100vh; background: #efefef; color: #1a1a1a;
      font: 11px/16px "Open Sans", "Noto Sans", sans-serif; }
    * { box-sizing: border-box; }
    button { all: unset; box-sizing: border-box; display: flex; align-items: center; cursor: default; }
    .ico { display: block; flex: none; }
    .grow { flex: 1; }

    .title { display: flex; align-items: center; height: 23px; padding: 0 14px 0 3px; gap: 5px; background: #f3f3f3; color: #000; }
    .title button { width: 20px; height: 20px; justify-content: center; }
    .winbtns { display: flex; gap: 26px; margin-left: auto; padding-bottom: 3px; }

    .tabs { display: flex; height: 28px; background: #004073; padding: 3px 9px 0 3px; gap: 6px; }
    .tab { width: 100px; justify-content: center; color: #fff; height: 25px; padding-bottom: 2px; }
    .tab.on { background: #f5f5f5; color: #3a3a3a; border-radius: 2px 2px 0 0; }
    .quick { display: flex; align-items: center; height: 22px; gap: 10px; padding: 0 13px 0 17px; background: #658bab;
      clip-path: polygon(0 50%, 7px 0, 100% 0, 100% 100%, 7px 100%); margin-left: auto; }
    .quick .pair { gap: 7px; }
    .quick .last { margin-left: 4px; }

    .ribbon { display: flex; height: 92px; background: #f5f5f5; }
    .sec { display: flex; flex-direction: column; padding-top: 5px; position: relative; }
    .sec::after { content: ""; position: absolute; right: 0; top: 8px; bottom: 0; width: 1px; background: #c4c4c4; }
    .body { display: flex; height: 72px; }
    .cap { text-align: center; line-height: 16px; color: #5f5f5f; }
    .big { flex-direction: column; padding-top: 6px; gap: 6px; text-align: center; line-height: 16px; }
    .big .sub { display: flex; align-items: center; justify-content: center; gap: 6px; min-height: 16px; }
    .off { color: #b5b5b5; }
    .file .big { width: 40px; }
    .file { width: 141px; }
    .lib { width: 58px; }
    .lib .big { flex: 1; }
    .line { height: 24px; padding-left: 3px; gap: 6px; }
    .line .ico:last-child { margin-left: 8px; }
    .gal { display: flex; margin: 1px 4px 3px 4px; height: 68px; background: #fff; border: 1px solid #bdbdbd; border-radius: 3px; padding-left: 5px; }
    .gal .big { width: 84px; padding-top: 7px; gap: 0; }
    .review .gal { width: 671px; margin-right: 3px; }
    .review .big { width: 80px; }
    .drop { width: 19px; justify-content: center; background: #f7f7f7; border-left: 1px solid #bdbdbd; margin-left: auto; }
    .prep .drop { margin-left: 4px; }
    .sim { width: 366px; }
    .sim .body { padding-left: 4px; }
    .form { display: flex; flex-direction: column; gap: 3px; width: 131px; margin-right: 6px; }
    .form > * { height: 22px; }
    .stoptime { display: flex; align-items: center; justify-content: space-between; padding-left: 3px; }
    .stoptime input { width: 64px; height: 22px; border: 1px solid #7a7a7a; background: #fff; font: inherit; color: #222; padding: 0 5px; margin: 0; }
    .pick { position: relative; display: flex; align-items: center; }
    .pick select { appearance: none; width: 100%; height: 22px; font: inherit; color: #222; background: #f2f2f2; border: 1px solid #858585; border-radius: 4px; padding: 0 4px; margin: 0; }
    .pick .ico { position: absolute; right: 9px; pointer-events: none; }
    .fastr { gap: 5px; padding-left: 3px; }
    .w46 { width: 46px; } .w54 { width: 54px; } .w58 { width: 58px; } .w62 { width: 62px; }
    .fold { align-self: flex-end; margin: 0 5px 2px auto; }

    .work { display: flex; flex: 1; border-top: 1px solid #8a8a8a; }
    .side { width: 31px; padding: 1px 0 0 1px; border-right: 1px solid #c6c6c6; }
    .side.r { width: 32px; padding: 2px 1px 0 8px; border: 0; }
    .vtab { writing-mode: vertical-rl; background: #fff; border: 1px solid #cfcfcf; width: 23px; height: 93px; justify-content: center; color: #000; }
    .side.l .vtab { transform: rotate(180deg); }
    .side.r .vtab { height: 112px; }
    .frame { flex: 1; min-width: 0; display: flex; flex-direction: column; border: 2px solid #3878ab; }
    .docs { display: flex; align-items: center; height: 25px; border-bottom: 1px solid #8a8a92; padding-left: 6px; gap: 12px; }
    .docs .doc { align-self: flex-end; height: 24px; margin: 0 0 -1px -5px; padding: 0 9px 2px; background: #fff; border: 1px solid #d4d4d4; border-bottom: 0; color: #000; }
    .docs .kbd { margin-left: auto; margin-right: 7px; }
    .stage { flex: 1; display: flex; min-height: 0; }
    .tools { width: 33px; display: flex; flex-direction: column; align-items: center; padding: 7px 0 6px; gap: 12px; border-right: 1px solid #83838d; }
    .tools hr { width: 19px; margin: -2px 0 -1px; border: 0; border-top: 1px solid #a8a8a8; }
    .view { flex: 1; display: flex; flex-direction: column; min-width: 0; border-top: 1px solid #83838d; border-right: 1px solid #83838d; border-bottom: 1px solid #83838d; }
    .crumbs { display: flex; align-items: center; height: 30px; border-bottom: 2px solid #83838d; padding: 2px 1px 3px; }
    .crumbs .in { flex: 1; display: flex; align-items: center; justify-content: space-between; height: 24px; background: #fff; padding: 0 4px 0 1px; color: #000; }
    .crumb { gap: 2px; }

    .status { display: grid; grid-template-columns: 1fr auto 1fr; align-items: center; height: 22px; padding: 3px 6px 0; color: #000; }
    .status .ode { text-align: right; color: #00007d; }
    .status .zoomv { padding-left: 52px; }

    .bar { display: flex; align-items: center; height: 48px; background: #212121; border-top: 1px solid #454545; padding: 0 19px 0 11px; color: #fff; }
    .task { width: 44px; height: 47px; justify-content: center; position: relative; }
    .task.active::before { content: ""; position: absolute; inset: 3px 2px 4px; background: #fff; opacity: .08; border-radius: 4px; }
    .task .ico { position: relative; }
    .task .mark { position: absolute; bottom: 5px; left: 19px; width: 6px; height: 3px; border-radius: 2px; background: #9b9b9b; }
    .task.active .mark { left: 14px; width: 16px; background: #ff5f5f; }
    .badge { position: absolute; left: 18px; top: 6px; width: 27px; height: 16px; border-radius: 8px; background: #fb6464; color: #1c1010; text-align: center; line-height: 16px; }
    .weather { gap: 9px; width: 151px; margin-left: auto; }
    .weather span { display: block; }
    .dim { color: #c9c9c9; }
    .tray { display: flex; align-items: center; }
    .tray .cell { width: 32px; justify-content: center; }
    .lang { padding: 2px 18px 0 9px; }
    .sys { gap: 7px; padding-right: 21px; }
    .clock { text-align: right; }
  `;

  private big(ic: string, a: string, b: unknown = nothing, cls = "", off = false): TemplateResult {
    return html`<button class="big ${cls} ${off ? "off" : ""}" ?disabled=${off}>
      ${icon(24, 24, R[ic])}
      <span>${a}<span class="sub">${b}</span></span>
    </button>`;
  }

  private line(ic: string, label: string) {
    return html`<button class="line">${icon(17, 16, S[ic])}<span>${label}</span>${caret()}</button>`;
  }

  private ribbon() {
    return html`<div class="ribbon">
      <section class="sec file">
        <div class="body">
          ${this.big("plus", "New", caret())}
          <div>${this.line("open", "Open")}${this.line("save", "Save")}${this.line("print", "Print")}</div>
        </div>
        <div class="cap">FILE</div>
      </section>
      <section class="sec lib">
        <div class="body">${this.big("library", "Library", "Browser")}</div>
        <div class="cap">LIBRARY</div>
      </section>
      <section class="sec prep">
        <div class="body"><div class="gal">
          ${this.big("logsig", "Log", "Signals", "", true)}
          ${this.big("viewer", "Add", "Viewer", "", true)}
          ${this.big("sigtable", "Signal", "Table")}
          <button class="drop" aria-label="More prepare apps">${caret()}</button>
        </div></div>
        <div class="cap">PREPARE</div>
      </section>
      <section class="sec sim">
        <div class="body">
          <div class="form">
            <div class="stoptime"><label for="stop">Stop Time</label><input id="stop" type="text" value="10.0" /></div>
            <div class="pick"><select aria-label="Simulation mode"><option>Normal</option></select>${caret()}</div>
            <button class="fastr">${icon(17, 16, S.fast)}Fast Restart</button>
          </div>
          ${this.big("stepback", "Step", html`Back ${caret()}`, "w58")}
          ${this.big("run", "Run", caret(), "w54")}
          ${this.big("stepfwd", "Step", "Forward", "w62")}
          ${this.big("stop", "Stop", nothing, "w46", true)}
        </div>
        <div class="cap">SIMULATE</div>
      </section>
      <section class="sec review">
        <div class="body"><div class="gal">
          ${this.big("datainsp", "Data", "Inspector")}
          ${this.big("logic", "Logic", "Analyzer")}
          ${this.big("bird", "Bird's-Eye", "Scope")}
          ${this.big("simmgr", "Simulation", "Manager")}
          <button class="drop" aria-label="More review apps">${caret()}</button>
        </div></div>
        <div class="cap">REVIEW RESULTS</div>
      </section>
      <button class="fold" aria-label="Minimize toolstrip">
        <svg class="ico" width="12" height="12" viewBox="0 0 12 12"><path d="M1 1.500h10" stroke="#999" stroke-width="2" /><path d="M1 10h10L6 4.500z" fill="#999" /></svg>
      </button>
    </div>`;
  }

  private quick() {
    const b = (k: string, name: string) => html`<button aria-label=${name}>${icon(16, 16, S[k])}</button>`;
    const m = html`<button aria-label="MATLAB">${icon(16, 24, matlab)}</button>`;
    return html`<div class="quick">
      ${b("save", "Save")}${b("undo", "Undo")}${b("redo", "Redo")}${b("select", "Select")}${b("find", "Find")}
      ${b("browse", "Browse")}${m}${b("export", "Export")}
      <button class="pair" aria-label="Model shortcuts">${icon(16, 16, S.model)}${caret(8, "#000")}</button>
      <button class="pair" aria-label="Help">${icon(16, 16, S.help)}${caret(8, "#000")}</button>
      <button class="last" aria-label="Options">${icon(16, 16, S.more)}</button>
    </div>`;
  }

  private tool(k: string, name: string) {
    return html`<button aria-label=${name}>${icon(16, 16, P[k])}</button>`;
  }

  render() {
    return html`
      <header class="title">
        ${icon(16, 16, simulink)}<span>PID_Step - Simulink</span>
        <div class="winbtns">
          <button aria-label="Minimize">${icon(12, 12, svg`<path d="M1 6.500h10" stroke="#111" />`)}</button>
          <button aria-label="Restore">${icon(12, 12, svg`<rect x="1.500" y="3.500" width="7" height="7" rx="1" fill="none" stroke="#111" /><path d="M4 1.500h5a1.500 1.500 0 0 1 1.500 1.500v5" fill="none" stroke="#111" />`)}</button>
          <button aria-label="Close">${icon(12, 12, svg`<path d="M1 1l10 10M11 1L1 11" stroke="#111" />`)}</button>
        </div>
      </header>
      <nav class="tabs">
        ${["SIMULATION", "DEBUG", "MODELING", "FORMAT", "APPS"].map((t, i) => html`<button class="tab ${i ? "" : "on"}">${t}</button>`)}
        ${this.quick()}
      </nav>
      ${this.ribbon()}
      <main class="work">
        <aside class="side l"><button class="vtab">Model Browser</button></aside>
        <div class="frame">
          <div class="docs">
            <button aria-label="Back">${icon(18, 16, P.left)}</button>
            <button aria-label="Forward">${icon(18, 16, P.right)}</button>
            <button aria-label="Up">${icon(18, 16, P.up)}</button>
            <button class="doc">PID_Step</button>
            <button class="kbd" aria-label="Keyboard shortcuts"><svg class="ico" width="18" height="10" viewBox="0 0 18 10"><rect x=".5" y=".5" width="17" height="9" fill="#f6f6f6" stroke="#888" /><path d="M2 3h14M2 5h14" stroke="#777" stroke-dasharray="1 1" /><path d="M2 7.500h2M5 7.500h8M14 7.500h2" stroke="#777" /></svg></button>
          </div>
          <div class="stage">
            <div class="tools">
              ${this.tool("hide", "Hide explorer bar")}<hr />
              ${this.tool("zoom", "Zoom")}${this.tool("fit", "Fit to view")}${this.tool("lines", "Sample time")}
              ${this.tool("text", "Annotation")}${this.tool("image", "Image")}${this.tool("area", "Area")}
              <div class="grow"></div>
              ${this.tool("camera", "Screenshot")}${this.tool("book", "Viewmarks")}${this.tool("more", "More")}
            </div>
            <div class="view">
              <div class="crumbs"><div class="in">
                <button class="crumb">${icon(16, 16, S.model16)}PID_Step</button>
                <button aria-label="Model path">${caret(10, "#000")}</button>
              </div></div>
              <block-canvas></block-canvas>
            </div>
          </div>
        </div>
        <aside class="side r"><button class="vtab">Property Inspector</button></aside>
      </main>
      <footer class="status"><span>Ready</span><span class="zoomv">250%</span><span class="ode">auto(ode3)</span></footer>
      <div class="bar">
        ${tasks.map((t) => html`<button class="task ${t.state ?? ""}" aria-label=${t.name}>
          ${icon(24, 24, t.art)}
          ${t.state ? html`<span class="mark"></span>` : nothing}
          ${t.badge ? html`<span class="badge">${t.badge}</span>` : nothing}
        </button>`)}
        <button class="weather">
          ${icon(20, 20, svg`<defs><linearGradient id="sun" x1="0" y1="0" x2="1" y2="1"><stop offset="0" stop-color="#fcb827" /><stop offset="1" stop-color="#f0731a" /></linearGradient></defs><circle cx="10" cy="10" r="10" fill="url(#sun)" />`)}
          <span><span>24°C</span><span class="dim">Sunny</span></span>
        </button>
        <div class="tray">
          ${tray.map((t) => html`<button class="cell" aria-label=${t.name}>${icon(16, 24, t.art)}</button>`)}
          <button class="lang">ENG</button>
          <button class="sys" aria-label="Network, volume and battery">
            ${icon(16, 16, svg`<path d="M1 6.500a10 10 0 0 1 14 0M3.300 9a7 7 0 0 1 9.400 0M5.600 11.400a3.600 3.600 0 0 1 4.800 0" fill="none" stroke="#eee" stroke-width="1.300" /><circle cx="8" cy="13.300" r="1.300" fill="#fff" />`)}
            ${icon(16, 16, svg`<path d="M1 6h3l4-3.500v11L4 10H1z" fill="none" stroke="#fff" stroke-width="1.200" /><path d="M10 6a3 3 0 0 1 0 4M12 4a6 6 0 0 1 0 8" fill="none" stroke="#fff" stroke-width="1.200" /><path d="M14 2.500a8 8 0 0 1 0 11" fill="none" stroke="#777" />`)}
            ${icon(17, 16, svg`<rect x="2" y="5" width="12" height="8" rx="1.500" fill="none" stroke="#fff" stroke-width="1.200" /><rect x="4" y="7" width="8" height="4" fill="#fff" /><path d="M15 7.500v3" stroke="#fff" stroke-width="1.500" /><path d="M4 1L1 6h2.500L2 10l4-5H3.700L5 1z" fill="#fff" stroke="#212121" stroke-width=".6" />`)}
          </button>
          <button class="clock"><span>8:12 AM<br />6/18/2025</span></button>
        </div>
      </div>`;
  }
}
